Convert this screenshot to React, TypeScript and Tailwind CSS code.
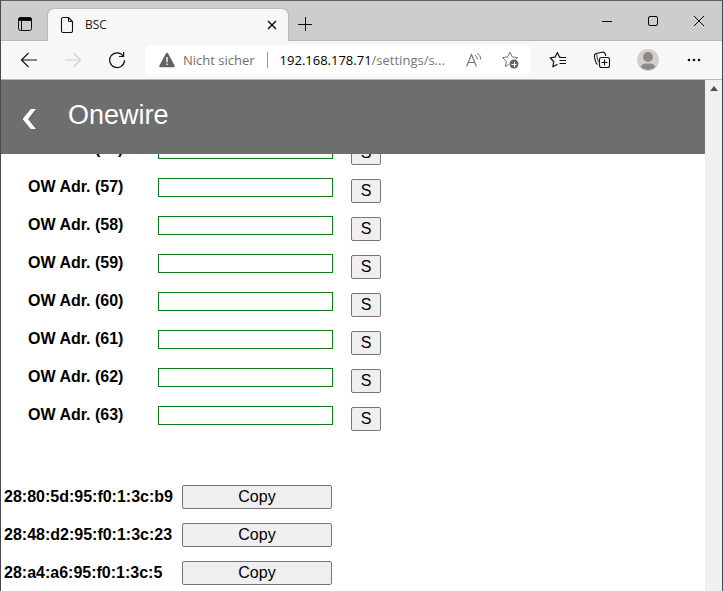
import type { ReactNode } from "react";

const slots = [56, 57, 58, 59, 60, 61, 62, 63];
const devices = ["28:80:5d:95:f0:1:3c:b9", "28:48:d2:95:f0:1:3c:23", "28:a4:a6:95:f0:1:3c:5"];

function IconButton({ label, className = "w-11", children }: { label: string; className?: string; children: ReactNode }) {
  return (
    <button type="button" aria-label={label} className={`flex h-full shrink-0 items-center justify-center ${className}`}>
      {children}
    </button>
  );
}

function TabBar() {
  return (
    <div className="flex h-10 items-end border-b border-[#b9b9b9] bg-[#cdcdcd]">
      <div className="flex h-8 w-[47px] shrink-0 items-center justify-center">
        <button type="button" aria-label="Tab actions">
          <svg width="16" height="16" viewBox="0 0 16 16" fill="none" stroke="#111">
            <rect x="1.5" y="1.5" width="13" height="13" rx="2" />
            <path d="M1.5 3.5a2 2 0 0 1 2-2h9a2 2 0 0 1 2 2V4.500h-13z" fill="#000" />
            <path d="M4.5 5v9" />
          </svg>
        </button>
      </div>
      <div className="relative z-10 -mb-px flex h-8 w-60 shrink-0 items-center rounded-t-md bg-[#f7f7f7] pl-3 pr-2 shadow-[0_0_2px_rgba(0,0,0,0.35)] [clip-path:inset(-3px_-3px_0_-3px)]">
        <svg width="14" height="18" viewBox="0 0 14 18" fill="none" stroke="#111" strokeWidth="1.1">
          <path d="M3 1.5h5.5l4 4V15A1.5 1.5 0 0 1 11 16.500H3A1.5 1.5 0 0 1 1.500 15V3A1.500 1.500 0 0 1 3 1.500z" />
          <path d="M8.500 1.500V4.500a1 1 0 0 0 1 1h3" />
        </svg>
        <span className="ml-[11px] flex-1 text-[12px] leading-4 text-[#222]">BSC</span>
        <button type="button" aria-label="Close tab" className="flex size-4 items-center justify-center">
          <svg width="10" height="10" viewBox="0 0 10 10" stroke="#111" strokeWidth="1.5">
            <path d="M1 1l8 8M9 1L1 9" />
          </svg>
        </button>
      </div>
      <button type="button" aria-label="New tab" className="flex h-8 w-[34px] shrink-0 items-center justify-center">
        <svg width="16" height="16" viewBox="0 0 16 16" stroke="#111">
          <path d="M1 8.500h14M8.500 1v14" />
        </svg>
      </button>
      <div className="ml-auto flex h-full">
        <IconButton label="Minimize" className="w-[46px]">
          <svg width="12" height="12" viewBox="0 0 12 12" stroke="#000">
            <path d="M1 6.500h10" />
          </svg>
        </IconButton>
        <IconButton label="Maximize" className="w-[46px]">
          <svg width="12" height="12" viewBox="0 0 12 12" fill="none" stroke="#000">
            <rect x="1.500" y="1.500" width="9" height="9" rx="1.500" />
          </svg>
        </IconButton>
        <IconButton label="Close window" className="w-[46px]">
          <svg width="12" height="12" viewBox="0 0 12 12" stroke="#000">
            <path d="M1 1l10 10M11 1L1 11" />
          </svg>
        </IconButton>
      </div>
    </div>
  );
}

function Toolbar() {
  return (
    <div className="flex h-[39px] items-center border-b border-[#b5b5b5] bg-[#f7f7f7] px-1.5">
      <IconButton label="Back">
        <svg width="18" height="16" viewBox="0 0 18 16" fill="none" stroke="#111" strokeWidth="1.2">
          <path d="M17 8H1.500M8.500 1L1.500 8l7 7" />
        </svg>
      </IconButton>
      <IconButton label="Forward">
        <svg width="18" height="16" viewBox="0 0 18 16" fill="none" stroke="#cfcfcf" strokeWidth="1.2">
          <path d="M1 8h15.500M9.500 1l7 7-7 7" />
        </svg>
      </IconButton>
      <IconButton label="Reload">
        <svg width="18" height="18" viewBox="0 0 18 18" fill="none" stroke="#111" strokeWidth="1.2">
          <path d="M15.200 5A7.400 7.400 0 1 0 16.500 9.300" />
          <path d="M15.600 1v4.500H11" />
        </svg>
      </IconButton>
      <div className="mx-1.5 flex h-[30px] min-w-0 flex-1 items-center rounded bg-white pl-3.5 pr-0.5 text-[13px] leading-5">
        <svg className="shrink-0" width="16" height="16" viewBox="0 0 16 16">
          <path d="M8 .8c.5 0 .9.3 1.100.7l6.500 12c.4.800-.1 1.700-1 1.700H1.400c-.9 0-1.400-.9-1-1.700l6.500-12c.2-.4.600-.7 1.100-.7z" fill="#616161" />
          <path d="M8 5v5.200M8 11.500v1.500" stroke="#fff" strokeWidth="1.400" />
        </svg>
        <span className="ml-2 shrink-0 text-[#707070]">Nicht sicher</span>
        <span className="mx-3 h-4 w-px shrink-0 bg-[#999]" />
        <span className="min-w-0 flex-1 truncate text-[#767676]">
          <span className="text-black">192.168.178.71</span>/settings/s...
        </span>
        <button type="button" aria-label="Read aloud" className="flex h-full w-9 shrink-0 items-center justify-center">
          <svg width="16" height="16" viewBox="0 0 16 16" fill="none" stroke="#707070">
            <path d="M.6 14.500L5.500 2.500l4.900 12M2.500 10.500h6" strokeWidth="1.1" />
            <path d="M9 3q2.200 1.200 2.200 4.500M11.200 1q3.600 2.200 3.600 6.500" />
          </svg>
        </button>
        <button type="button" aria-label="Add to favorites" className="flex h-full w-9 shrink-0 items-center justify-center">
          <svg width="18" height="18" viewBox="0 0 18 18" fill="none" stroke="#707070">
            <path d="M14.500 8.500l2-1.900-5.200-.7L9 1.200 6.700 5.900l-5.200.7 3.800 3.600-.9 5.200L7.500 13.600" strokeLinejoin="round" />
            <circle cx="13" cy="13" r="4.500" fill="#666" stroke="none" />
            <path d="M10.500 13.500h5M13.500 11v5" stroke="#fff" />
          </svg>
        </button>
      </div>
      <IconButton label="Favorites">
        <svg width="18" height="18" viewBox="0 0 18 18" fill="none" stroke="#111" strokeWidth="1.2" strokeLinejoin="round">
          <path d="M12.500 6.500L10.600 6.200 8.400 1.500 6 6.200l-4.900.6 3.600 3.700L3.900 15.800l4.600-2.500" />
          <path d="M10.500 6.500H17M10.500 9.500H17M10.500 12.500H17" />
        </svg>
      </IconButton>
      <IconButton label="Collections">
        <svg width="18" height="18" viewBox="0 0 18 18" fill="none" stroke="#111" strokeWidth="1.1">
          <path d="M4.500 13.500Q3 12.500 2.600 10.500L1.300 5.500Q1 3.200 3 2.500L9 1.200Q11.500.8 12.300 3l.5 2" />
          <path d="M5.300 11L3.800 5V3" strokeWidth=".8" />
          <rect x="6.500" y="6.500" width="10" height="10" rx="2" />
          <path d="M8.500 11.500h6M11.500 8.500v6" />
        </svg>
      </IconButton>
      <IconButton label="Profile" className="w-12">
        <svg width="22" height="22" viewBox="0 0 22 22">
          <circle cx="11" cy="11" r="11" fill="#d2d0ce" />
          <circle cx="11" cy="8" r="5" fill="#8d8985" />
          <path d="M3.500 18q1.500-3.500 5-3.500h5q3.500 0 5 3.500a11 11 0 0 1-15 0z" fill="#8d8985" />
        </svg>
      </IconButton>
      <IconButton label="Settings and more">
        <svg width="14" height="4" viewBox="0 0 14 4" fill="#111">
          <circle cx="2" cy="2" r="1.300" />
          <circle cx="7" cy="2" r="1.300" />
          <circle cx="12" cy="2" r="1.300" />
        </svg>
      </IconButton>
    </div>
  );
}

const pushButton = "h-6 rounded-xs border border-[#767676] bg-[#efefef] text-[16px] leading-5 text-black";

export default function App() {
  return (
    <div className="flex h-screen flex-col overflow-hidden border-x border-t border-[#48484a] border-t-[#5f5d60] bg-white font-['Open_Sans',sans-serif]">
      <TabBar />
      <Toolbar />
      <div className="flex min-h-0 flex-1 font-['Liberation_Sans',Arial,sans-serif] text-black">
        <div className="flex min-w-0 flex-1 flex-col overflow-hidden">
          <header className="relative z-10 flex h-[74px] shrink-0 items-center bg-[#6e6e6e] pl-5 text-white">
            <a href="#back" aria-label="Back" className="flex w-[47px] items-center pt-1">
              <svg width="16" height="22" viewBox="0 0 16 22" fill="#fff">
                <path d="M9.800 1h5L7 11l7.800 10h-5L2 11.500v-1z" />
              </svg>
            </a>
            <h1 className="pb-1 text-[27px] leading-8">Onewire</h1>
          </header>
          <main className="-mt-6 flex flex-col gap-11">
            <div>
              {slots.map((n) => (
                <div key={n} className="flex h-[38px] items-center pl-[27px]">
                  <label htmlFor={`adr-${n}`} className="w-[130px] text-[16px] font-bold leading-5">
                    OW Adr. ({n})
                  </label>
                  <input id={`adr-${n}`} type="text" className="h-[19px] w-[175px] border border-[#0f7d1c] bg-white px-1 text-[13px]" />
                  <button type="button" className={`${pushButton} mt-2 ml-[18px] w-[30px]`}>
                    S
                  </button>
                </div>
              ))}
            </div>
            <div>
              {devices.map((id) => (
                <div key={id} className="flex h-[38px] items-center pl-[3px]">
                  <span className="w-[178px] text-[16px] font-bold leading-5">{id}</span>
                  <button type="button" className={`${pushButton} w-[150px]`}>
                    Copy
                  </button>
                </div>
              ))}
            </div>
          </main>
        </div>
        <div className="flex w-[17px] shrink-0 justify-center bg-[#f0f0f0] pt-1.5">
          <svg width="8" height="5" viewBox="0 0 8 5" fill="#505050">
            <path d="M4 0l4 5H0z" />
          </svg>
        </div>
      </div>
    </div>
  );
}
